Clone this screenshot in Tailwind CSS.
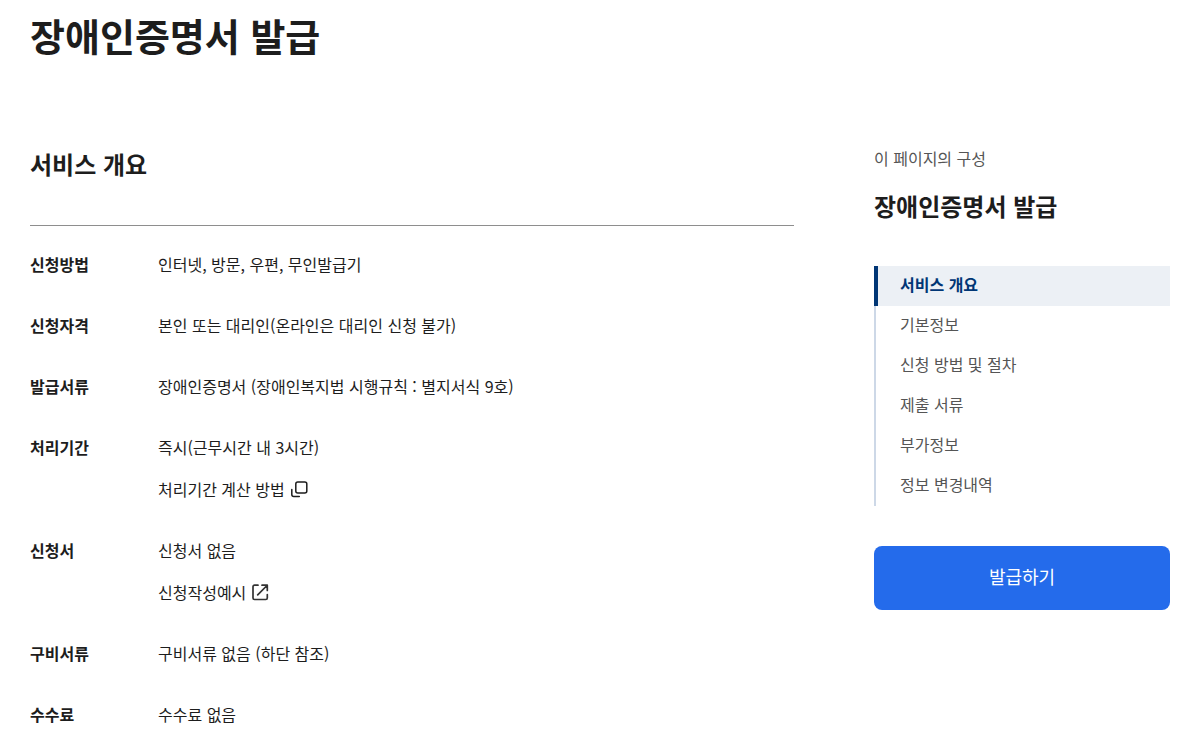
<!DOCTYPE html>
<html lang="ko">
<head>
    <meta charset="UTF-8">
    <meta name="viewport" content="width=device-width, initial-scale=1.0">
    <title>장애인증명서 발급</title>
    <script src="https://cdn.jsdelivr.net/npm/@tailwindcss/browser@4"></script>
</head>
<body class="bg-white font-['Noto_Sans_CJK_KR',sans-serif] text-[#1d1d1d]">

    <div class="pt-[5px] pr-[31px] pl-[30px]">
        <h1 class="text-[38px] leading-[60px] font-bold">장애인증명서 발급</h1>

        <div class="mt-[81px] flex items-start gap-20">
            <!-- Service overview -->
            <main class="flex-1">
                <h2 class="text-2xl leading-9 font-bold">서비스 개요</h2>

                <dl class="mt-[43px] grid grid-cols-[128px_1fr] gap-y-[35px] border-t border-[#8e8e8e] pt-[25px] text-base leading-[26px]">
                    <dt class="font-bold">신청방법</dt>
                    <dd>인터넷, 방문, 우편, 무인발급기</dd>
                    <dt class="font-bold">신청자격</dt>
                    <dd>본인 또는 대리인(온라인은 대리인 신청 불가)</dd>
                    <dt class="font-bold">발급서류</dt>
                    <dd>장애인증명서 (장애인복지법 시행규칙 : 별지서식 9호)</dd>
                    <dt class="font-bold">처리기간</dt>
                    <dd>
                        <p>즉시(근무시간 내 3시간)</p>
                        <button type="button" class="mt-4 flex items-center gap-1">
                            처리기간 계산 방법
                            <svg class="size-5" viewBox="0 0 20 20" fill="none" stroke="currentColor" stroke-width="1.5" stroke-linecap="round" stroke-linejoin="round"><rect x="6.800" y="3" width="11" height="11" rx="2"/><path d="M2.800 10.500v5a2 2 0 0 0 2 2h5.500"/></svg>
                        </button>
                    </dd>
                    <dt class="font-bold">신청서</dt>
                    <dd>
                        <p>신청서 없음</p>
                        <a href="#" class="mt-4 flex items-center gap-1">
                            신청작성예시
                            <svg class="size-5" viewBox="0 0 20 20" fill="none" stroke="#333333" stroke-width="1.7" stroke-linecap="round" stroke-linejoin="round"><path d="M8 3.200H4.500A1.500 1.500 0 0 0 3 4.700v11.300A1.500 1.500 0 0 0 4.500 17.500h11.300a1.500 1.500 0 0 0 1.500-1.500V12.500M12 3.200h5.300V8.500M17 3.500l-9.300 9.300"/></svg>
                        </a>
                    </dd>
                    <dt class="font-bold">구비서류</dt>
                    <dd>구비서류 없음 (하단 참조)</dd>
                    <dt class="font-bold">수수료</dt>
                    <dd>수수료 없음</dd>
                </dl>
            </main>

            <!-- Page contents -->
            <aside class="w-[296px] shrink-0">
                <p class="text-base leading-6 text-[#555555]">이 페이지의 구성</p>
                <h2 class="mt-[18px] text-2xl leading-9 font-bold">장애인증명서 발급</h2>
                <nav class="mt-[42px] border-l-2 border-[#cdd8e7] text-base leading-9 text-[#555555]">
                    <a href="#" class="-ml-0.5 block h-10 border-l-4 border-[#003675] bg-[#ecf0f5] pl-[22px] font-bold text-[#003675]">서비스 개요</a>
                    <a href="#" class="block h-10 pl-6">기본정보</a>
                    <a href="#" class="block h-10 pl-6">신청 방법 및 절차</a>
                    <a href="#" class="block h-10 pl-6">제출 서류</a>
                    <a href="#" class="block h-10 pl-6">부가정보</a>
                    <a href="#" class="block h-10 pl-6">정보 변경내역</a>
                </nav>
                <button type="button" class="mt-10 h-16 w-full rounded-lg bg-[#246beb] pb-1 text-lg text-white">발급하기</button>
            </aside>
        </div>
    </div>

</body>
</html>
